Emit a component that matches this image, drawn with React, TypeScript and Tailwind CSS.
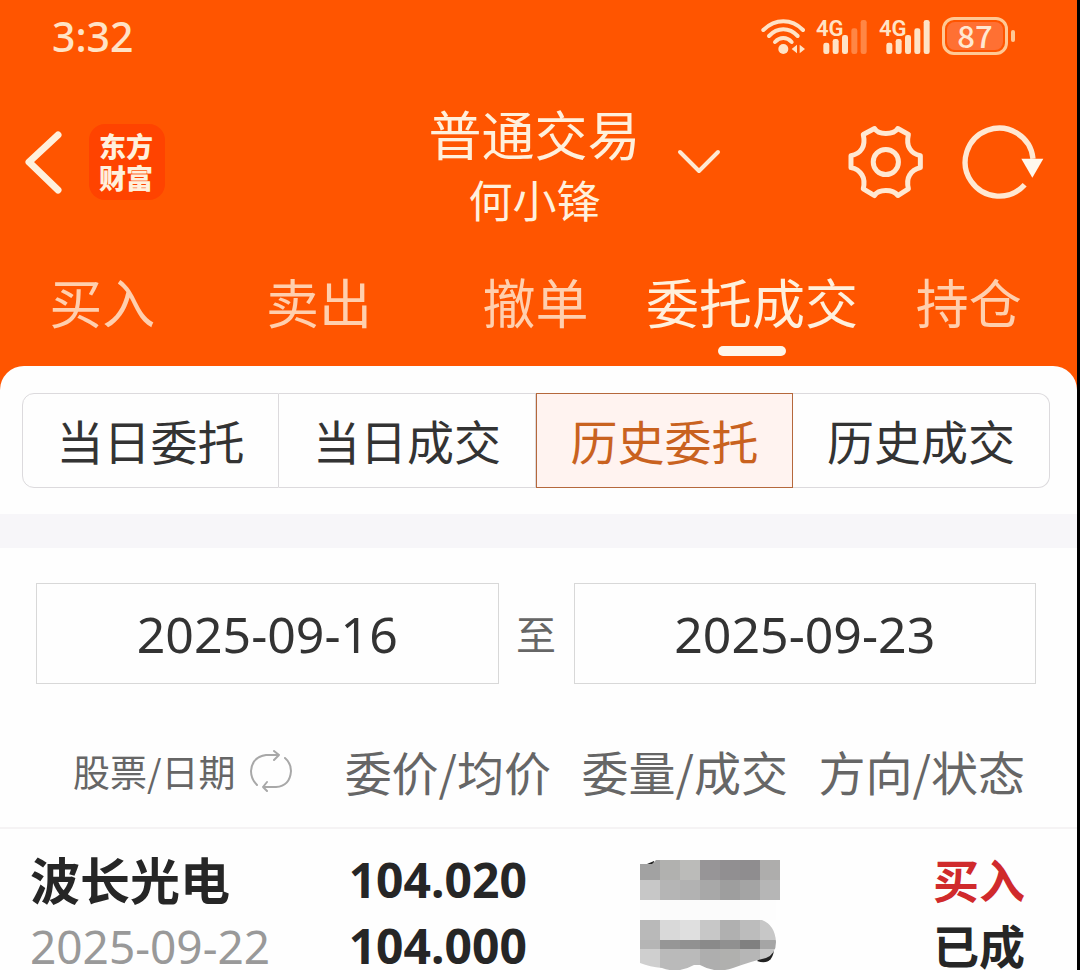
import { useState } from "react"
import clsx from "clsx"

const tabs = ["买入", "卖出", "撤单", "委托成交", "持仓"]
const segments = ["当日委托", "当日成交", "历史委托", "历史成交"]

const orders = [
  { name: "波长光电", date: "2025-09-22", price: "104.020", average: "104.000", side: "买入", status: "已成" },
]

// grey levels of the hidden quantity, one row of blocks after another
const mosaic = [
  { y: 0, h: 20, cells: ["#a2a2a2", "#b1b1af", "#bbbbb9", "#979597", "#918f91", "#8f8d8f", "#aeadac"] },
  { y: 20, h: 20, cells: ["#c7c7c7", "#b5b5b5", "#b2b2b2", "#a8a8a8", "#9e9e9e", "#a4a4a4", "#b6b6b6"] },
  { y: 40, h: 20, cells: ["#fcfcfc", "#fbfbfb", "#fbfbfb", "#fbfbfb", "#fbfbfb", "#fcfcfc", "#fdfdfd"] },
  { y: 60, h: 20, cells: ["#b9b9b9", "#d9d9d9", "#dfdfdf", "#c7c7c7", "#b0b0b0", "#bcbcbc", "#c7c7c7"] },
  { y: 80, h: 9, cells: ["#b5b5b5", "#969696", "#919191", "#8a8a8a", "#909090", "#808080", "#a5a5a5"] },
  { y: 89, h: 21, cells: ["#cfcfcf", "#bababa", "#bababa", "#aeaeae", "#b0b0ae", "#b6b6b6", "#c7c7c7"] },
]

function WifiIcon() {
  return (
    <svg className="h-9 w-11" viewBox="64 48 132 108" fill="none" stroke="#ffe3c6" strokeWidth="12" strokeLinecap="round">
      <path d="M71 84Q98 58 131 58Q164 58 190 84" />
      <path d="M88 102Q107 82 131 82Q155 82 174 102" />
      <path d="M106 120Q117 108 131 108Q145 108 156 120" />
      <circle cx="131" cy="141" r="15" fill="#ffe3c6" stroke="none" />
      <path d="M156 141L172 128V154ZM196 141L180 128V154Z" fill="#ffe3c6" stroke="none" />
    </svg>
  )
}

function SignalIcon({ level }: { level: number }) {
  const bars = [122, 111, 99, 79, 54]
  return (
    <svg className="h-9 w-[52px] overflow-visible" viewBox="0 48 156 108">
      <text x="0" y="102" fontSize="66" fontWeight="600" fill="#ffe3c6" className="font-['Roboto',sans-serif]">4G</text>
      {bars.map((top, i) => (
        <rect key={top} x={22 + i * 28} y={top} width="18" height={156 - top} rx="7" fill="#ffe3c6" opacity={i < level ? 1 : 0.35} />
      ))}
    </svg>
  )
}

function Battery({ value }: { value: number }) {
  return (
    <div className="flex items-center gap-[3px]">
      <div className="flex h-[38px] w-[66px] items-center rounded-xl border-[3px] border-[#ffc894] p-[2px]">
        <div className="flex h-full w-full items-center justify-center rounded-lg bg-[#ff7033] pb-[3px] text-[31px] leading-none font-medium text-[#ffe8d2]">
          {value}
        </div>
      </div>
      <div className="h-3 w-1 rounded-sm bg-[#ffc894]" />
    </div>
  )
}

function GearIcon() {
  return (
    <svg className="h-19 w-[77px]" viewBox="80 71 232 228" fill="none" stroke="#ffe8d2" strokeWidth="15" strokeLinejoin="round">
      <path d="M163 84Q172 99 197 99Q224 99 233 84L265 102Q259 130 269 145Q279 161 301 166V202Q279 207 269 224Q259 240 265 266L233 286Q222 271 197 271Q172 271 163 286L129 266Q135 240 125 224Q114 206 92 202V166Q115 161 125 145Q135 129 129 102Z" />
      <circle cx="197" cy="185" r="38" />
    </svg>
  )
}

function ReloadIcon() {
  return (
    <svg className="h-19 w-[83px]" viewBox="425 71 249 228" fill="none">
      <path d="M638 175A102 102 0 1 0 613 253" stroke="#ffe8d2" strokeWidth="16" />
      <path d="M603 175H669L636 232Z" fill="#fff8ee" />
    </svg>
  )
}

function SwapIcon() {
  return (
    <svg className="h-[42px] w-[42px]" viewBox="0 0 42 42" fill="none" stroke="#a8a8a8" strokeWidth="2" strokeLinecap="round" strokeLinejoin="round">
      <path d="M7 35Q1 29 1 21Q2 7 16 5H29M24 1L29 5L24 10" />
      <path d="M35 8Q41 13 41 21Q40 36 26 37H13M17 32L13 37L17 41" />
    </svg>
  )
}

function HiddenQuantity() {
  return (
    <svg className="ml-[58px] h-[110px] w-[140px]" viewBox="0 0 140 110" role="img" aria-label="***">
      <defs>
        <clipPath id="smudge">
          <path d="M0 4H12L16 0H140V40H136V60H122Q135 65 136 82Q136 94 126 98Q112 101 93 108Q76 114 60 105H54Q38 114 22 108Q10 107 0 103Z" />
        </clipPath>
      </defs>
      <path d="M7 4L14 1V5Z" fill="#222" />
      <path d="M117 101Q132 106 134 90L126 92Z" fill="#222" />
      <g clipPath="url(#smudge)" shapeRendering="crispEdges">
        {mosaic.map((row) =>
          row.cells.map((fill, i) => <rect key={`${row.y}-${i}`} x={i * 20} y={row.y} width="20" height={row.h} fill={fill} />)
        )}
      </g>
    </svg>
  )
}

export default function App() {
  const [tab, setTab] = useState("委托成交")
  const [segment, setSegment] = useState("历史委托")

  return (
    <div className="flex min-h-screen flex-col overflow-hidden border-r-[3px] border-black bg-[#ff5500] font-['Noto_Sans_CJK_SC',sans-serif]">
      {/* Status bar */}
      <div className="flex h-[74px] items-center justify-between pr-[62px] pb-[2px] pl-[52px]">
        <span className="font-['Noto_Sans',sans-serif] text-[41px] leading-none font-medium text-[#ffe3c6]">3:32</span>
        <div className="flex items-center gap-[11px]">
          <WifiIcon />
          <SignalIcon level={3} />
          <SignalIcon level={5} />
          <Battery value={87} />
        </div>
      </div>

      {/* Title bar */}
      <header className="mt-[26px] grid grid-cols-[1fr_auto_1fr] items-center pr-8 pl-6 text-[#fff0dc]">
        <div className="flex items-center gap-[25px] pb-2">
          <button type="button" aria-label="返回">
            <svg className="h-16 w-10" viewBox="0 0 40 64" fill="none" stroke="#fff0dc" strokeWidth="7" strokeLinecap="round" strokeLinejoin="round">
              <path d="M34 5L5 32L34 60" />
            </svg>
          </button>
          <div className="flex h-19 w-19 items-center justify-center rounded-2xl bg-[#ff4300]">
            <p className="w-14 text-[27px] leading-8 font-black">东方 财富</p>
          </div>
        </div>
        <div className="text-center">
          <h1 className="text-[53px] leading-[66px]">普通交易</h1>
          <p className="text-[44px] leading-[66px]">何小锋</p>
        </div>
        <div className="flex items-center justify-between pb-2 pl-[34px]">
          <button type="button" aria-label="切换账户">
            <svg className="h-7 w-12" viewBox="0 0 48 28" fill="none" stroke="#ffe8d2" strokeWidth="4" strokeLinecap="round" strokeLinejoin="round">
              <path d="M5 4L24 23L43 4" />
            </svg>
          </button>
          <div className="flex items-center gap-[38px]">
            <button type="button" aria-label="设置"><GearIcon /></button>
            <button type="button" aria-label="刷新"><ReloadIcon /></button>
          </div>
        </div>
      </header>

      <nav className="-ml-1.5 grid grid-cols-5 pt-[39px] pb-[10px]">
        {tabs.map((item) => (
          <button
            key={item}
            type="button"
            onClick={() => setTab(item)}
            className={clsx(
              "flex flex-col items-center gap-[15px] text-[53px] leading-[60px] whitespace-nowrap",
              item === tab ? "text-[#fff0dc]" : "text-[#ffcfae]"
            )}
          >
            <span>{item}</span>
            <span className={clsx("h-[10px] w-[68px] rounded-full", item === tab && "bg-[#fff6ea]")} />
          </button>
        ))}
      </nav>

      <main className="flex-1 rounded-t-3xl bg-[#fefefe] pt-[27px]">
        {/* Segmented control */}
        <div className="mr-[27px] ml-[22px] grid h-[95px] grid-cols-4">
          {segments.map((item) => (
            <button
              key={item}
              type="button"
              onClick={() => setSegment(item)}
              className={clsx(
                "border pb-[2px] text-[47px] leading-none whitespace-nowrap first:rounded-l-xl last:rounded-r-xl",
                item === segment
                  ? "border-[#b5683c] bg-[#fff3f0] text-[#c9621f]"
                  : "border-[#dcdadd] text-[#333] not-first:border-l-0"
              )}
            >
              {item}
            </button>
          ))}
        </div>

        <div className="mt-[26px] h-[34px] bg-[#f7f6f9]" />

        {/* Date range */}
        <div className="flex items-center pt-[35px] pr-[41px] pl-9">
          <input
            aria-label="开始日期"
            defaultValue="2025-09-16"
            className="h-[101px] min-w-0 flex-1 border border-[#d8d8d8] text-center font-['Noto_Sans',sans-serif] text-[50px] text-[#333]"
          />
          <span className="w-[75px] pb-[2px] text-center text-[40px] leading-none text-[#666]">至</span>
          <input
            aria-label="结束日期"
            defaultValue="2025-09-23"
            className="h-[101px] min-w-0 flex-1 border border-[#d8d8d8] text-center font-['Noto_Sans',sans-serif] text-[50px] text-[#333]"
          />
        </div>

        {/* Orders */}
        <table className="w-full table-fixed border-collapse text-left">
          <thead>
            <tr className="border-b-2 border-[#f5f3f4] text-[47px] leading-[56px] whitespace-nowrap text-[#666]">
              <th className="w-[32%] pt-[59px] pb-7 pl-[73px] text-[37px] font-normal">
                <span className="flex items-center gap-[14px]">
                  股票/日期
                  <SwapIcon />
                </span>
              </th>
              <th className="w-[22%] pt-[59px] pb-7 font-normal">委价/均价</th>
              <th className="w-[22%] pt-[59px] pb-7 font-normal">委量/成交</th>
              <th className="w-[24%] pt-[59px] pb-7 font-normal">方向/状态</th>
            </tr>
          </thead>
          <tbody>
            {orders.map((order) => (
              <tr key={order.name} className="align-top leading-[48px] text-[#262626]">
                <td className="pt-[25px] pl-[30px]">
                  <p className="text-[50px] font-bold">{order.name}</p>
                  <p className="mt-5 font-['Noto_Sans',sans-serif] text-[46px] whitespace-nowrap text-[#999]">{order.date}</p>
                </td>
                <td className="pt-[27px] pl-1 font-['Noto_Sans',sans-serif] text-[48px] font-bold">
                  <p>{order.price}</p>
                  <p className="mt-[18px]">{order.average}</p>
                </td>
                <td className="pt-[31px]">
                  <HiddenQuantity />
                </td>
                <td className="pt-[25px] pr-[52px] text-right text-[46px] font-bold">
                  <p className="text-[#d02a2c]">{order.side}</p>
                  <p className="mt-[18px]">{order.status}</p>
                </td>
              </tr>
            ))}
          </tbody>
        </table>
      </main>
    </div>
  )
}
